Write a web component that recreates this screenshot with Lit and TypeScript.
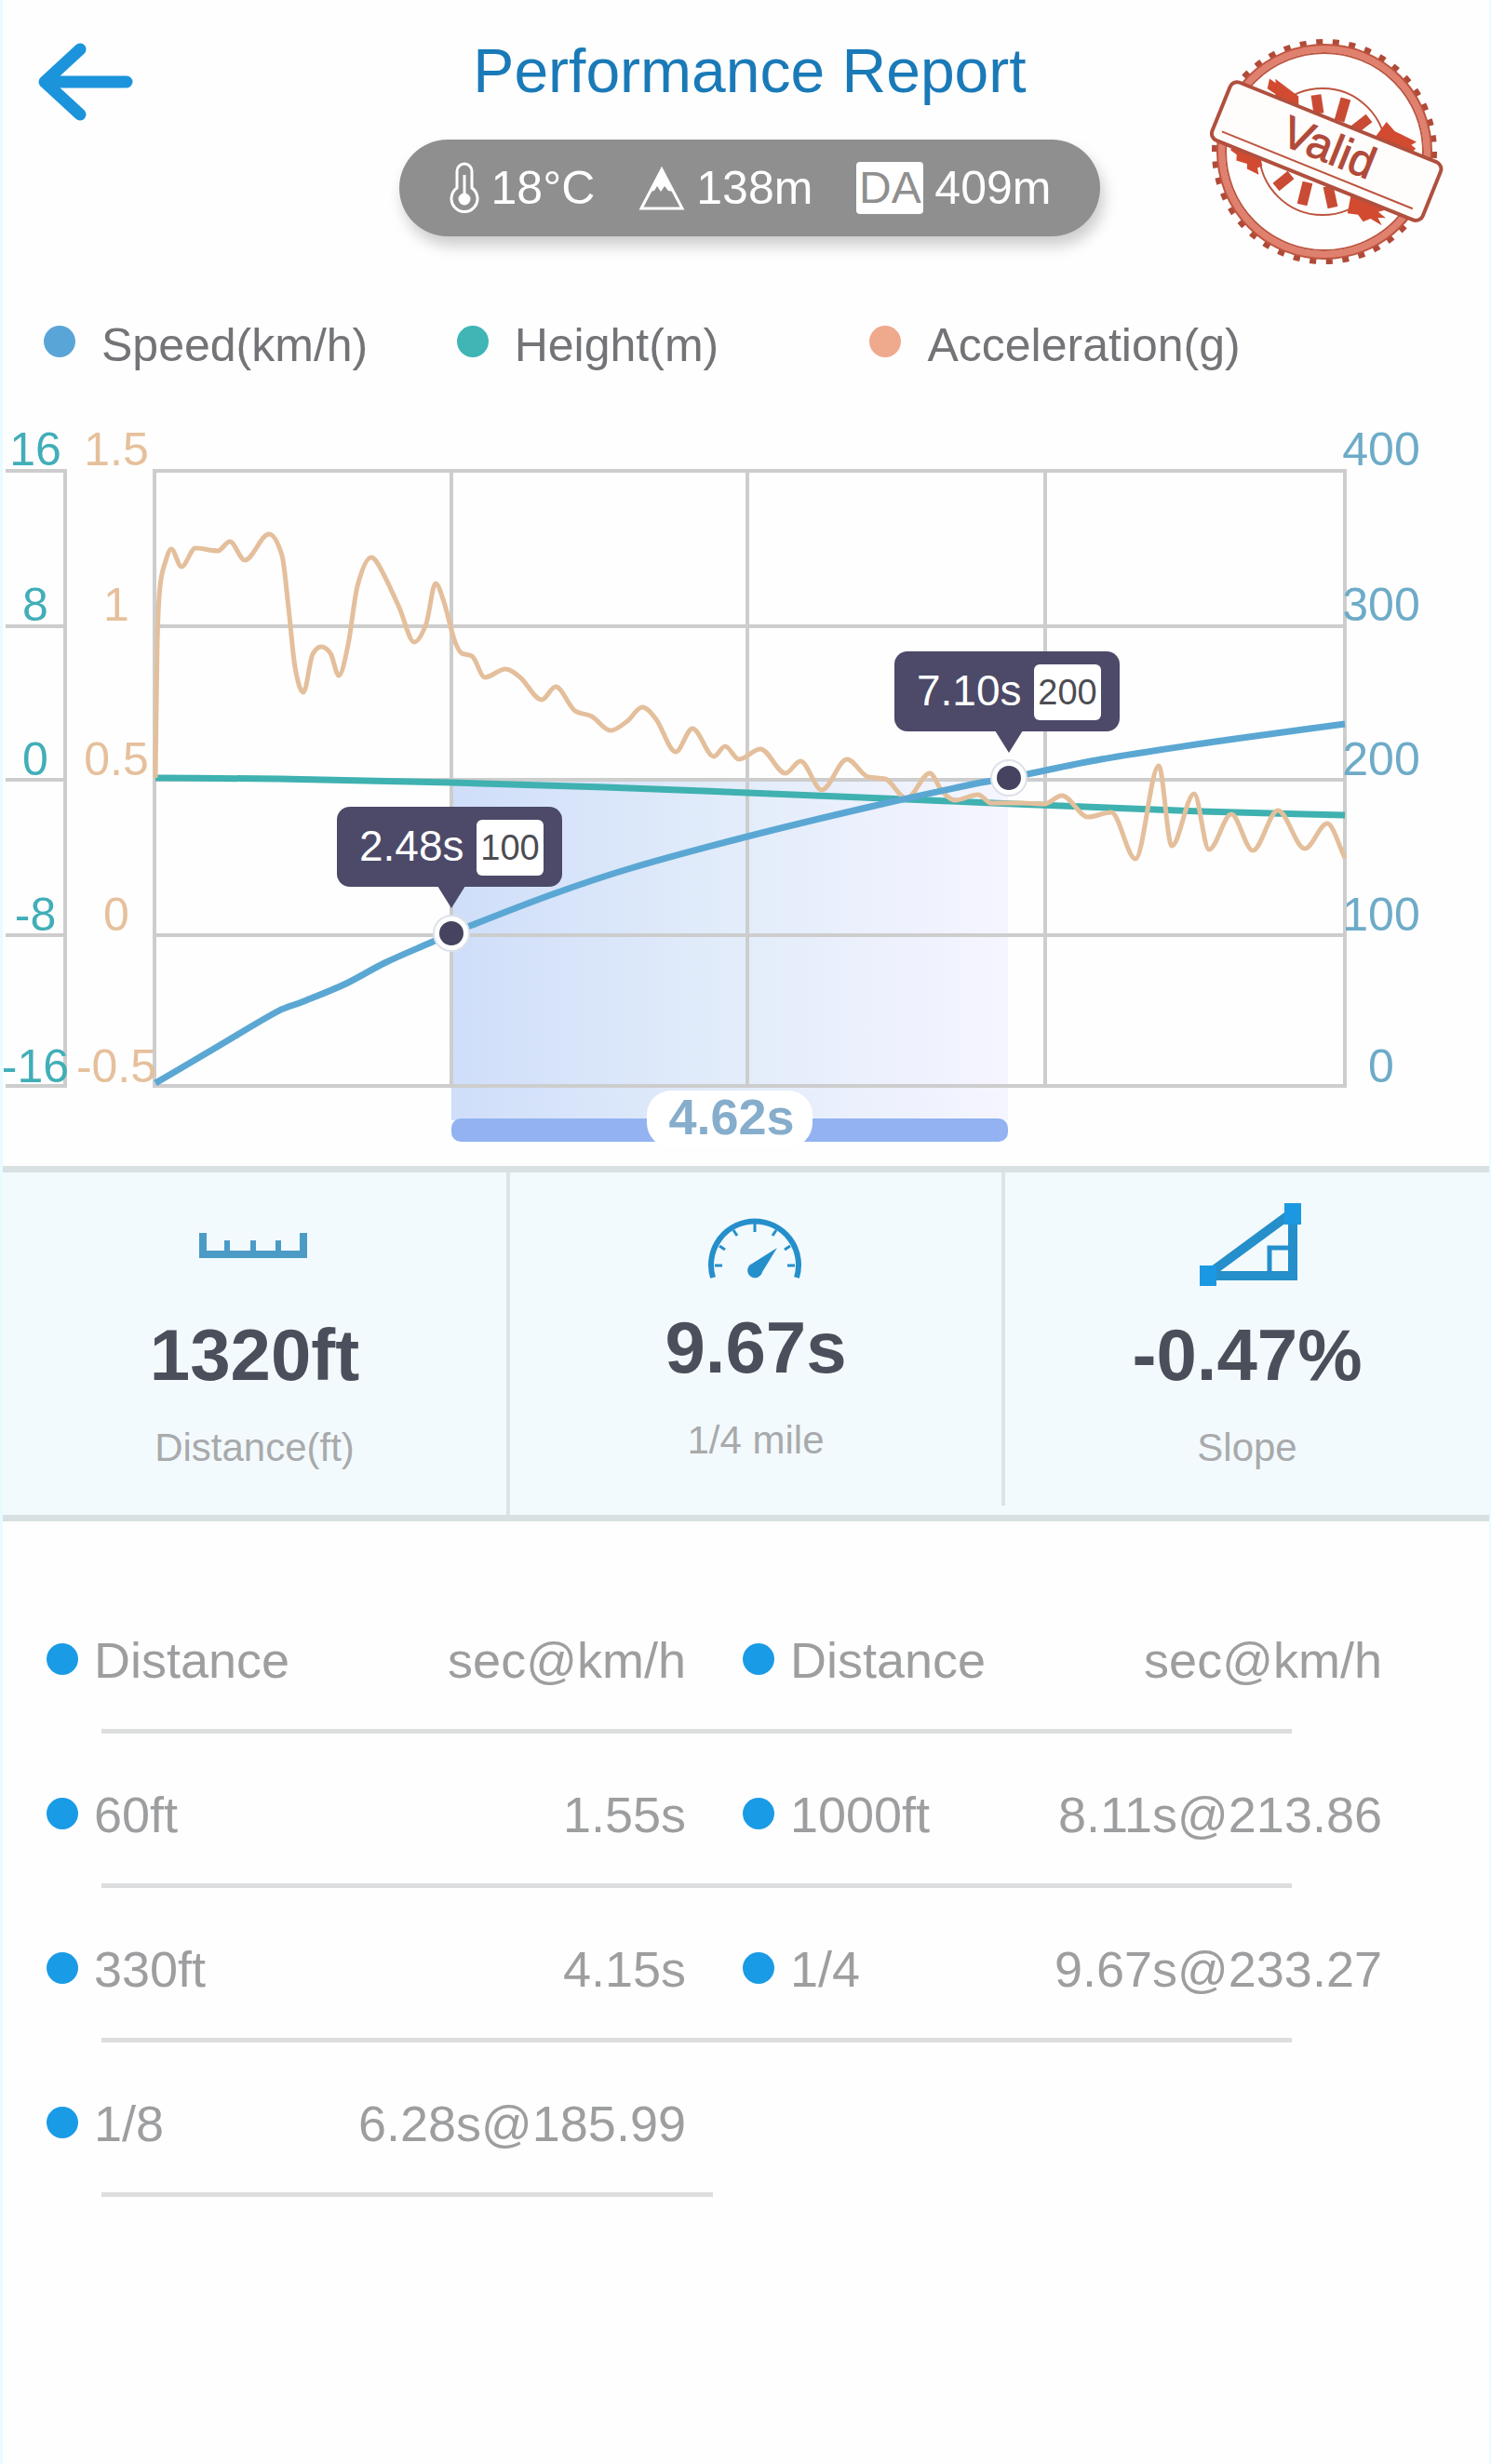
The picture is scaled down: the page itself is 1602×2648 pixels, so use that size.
import { css, html, svg, LitElement } from "lit";
import { customElement, property } from "lit/decorators.js";

type Point = [number, number];

const GRID_X = [166, 485, 803, 1123, 1445];
const GRID_Y = [506, 673, 838, 1005, 1167];
const LABEL_Y = [500, 667, 833, 1000, 1163];

const HEIGHT_LABELS = ['16', '8', '0', '-8', '-16'];
const ACCEL_LABELS = ['1.5', '1', '0.5', '0', '-0.5'];
const SPEED_LABELS = ['400', '300', '200', '100', '0'];

const SPEED: Point[] = [
    [167, 1164], [235, 1124], [300, 1086], [324, 1077], [372, 1057], [413, 1035], [465, 1012],
    [485, 1003], [591, 962], [678, 933], [803, 899], [935, 867], [1049, 842],
    [1084, 836], [1183, 816], [1327, 794], [1445, 778],
];

const HEIGHT: Point[] = [
    [167, 836], [300, 837], [485, 841], [650, 846], [803, 852], [950, 858], [1089, 864],
    [1291, 872], [1445, 876],
];

const ACCEL: Point[] = [
    [167, 836], [169, 690], [172, 630], [178, 603], [184, 590], [195, 609], [210, 589], [234, 592],
    [247, 582], [263, 602], [289, 574], [303, 597], [310, 653], [317, 717], [326, 744],
    [336, 703], [345, 695], [355, 702], [364, 726], [374, 693], [384, 630], [399, 599],
    [410, 613], [429, 653], [445, 690], [458, 670], [468, 627], [477, 647], [488, 687],
    [496, 702], [507, 705], [521, 728], [543, 719], [559, 728], [582, 752], [597, 738],
    [618, 764], [636, 770], [656, 785], [674, 775], [690, 760], [705, 773], [726, 808],
    [744, 783], [767, 813], [779, 802], [794, 816], [817, 805], [844, 831], [860, 818],
    [883, 849], [910, 816], [933, 835], [951, 837], [974, 858], [999, 831], [1012, 850],
    [1026, 860], [1051, 854], [1065, 863], [1097, 863], [1122, 864], [1141, 855], [1169, 878],
    [1194, 873], [1220, 923], [1245, 823], [1259, 909], [1283, 853], [1299, 913], [1323, 875],
    [1346, 914], [1373, 871], [1402, 912], [1426, 885], [1445, 922],
];

// Cubic curve through the points, flat at every local peak and valley
function smoothPath(points: Point[]) {
    const slope = (a: Point, b: Point) => (b[1] - a[1]) / (b[0] - a[0]);
    const tangents = points.map((p, i) => {
        if (i === 0) return slope(p, points[1]);
        if (i === points.length - 1) return slope(points[i - 1], p);
        const before = slope(points[i - 1], p);
        const after = slope(p, points[i + 1]);
        if (before * after <= 0) return 0;
        const limit = 2 * Math.min(Math.abs(before), Math.abs(after));
        const mean = Math.abs(slope(points[i - 1], points[i + 1]));
        return Math.sign(before) * Math.min(limit, mean);
    });
    let d = `M${points[0][0]},${points[0][1]}`;
    for (let i = 1; i < points.length; i++) {
        const [x0, y0] = points[i - 1];
        const [x1, y1] = points[i];
        const h = (x1 - x0) / 3;
        d += `C${x0 + h},${y0 + tangents[i - 1] * h} ${x1 - h},${y1 - tangents[i] * h} ${x1},${y1}`;
    }
    return d;
}

@customElement('run-chart')
export class RunChart extends LitElement {
    static styles = css`
        :host {
            display: block;
        }
        svg {
            display: block;
            width: 100%;
            height: auto;
            font-family: "Liberation Sans", Arial, sans-serif;
        }
        .grid {
            stroke: #cdcdcd;
            stroke-width: 4;
            fill: none;
        }
        .series {
            fill: none;
            stroke-linejoin: round;
        }
        .speed {
            stroke: #5ba7d3;
            stroke-width: 7;
        }
        .height {
            stroke: #3fb1b0;
            stroke-width: 7;
        }
        .accel {
            stroke: #e4bf9c;
            stroke-width: 5;
        }
        .axis {
            font-size: 50px;
            text-anchor: middle;
        }
        .axis-height {
            fill: #41aeb8;
        }
        .axis-accel {
            fill: #e6c09c;
        }
        .axis-speed {
            fill: #6dabc8;
        }
        .bubble {
            fill: #4c4a68;
        }
        .time {
            font-size: 46px;
            fill: #fff;
        }
        .mark {
            font-size: 38px;
            fill: #4c4c52;
            text-anchor: middle;
        }
        .span {
            font-size: 54px;
            font-weight: bold;
            fill: #86adcb;
            text-anchor: middle;
        }
    `;

    private axis(labels: string[], x: number, name: string) {
        return labels.map((label, i) => svg`
            <text class="axis ${name}" x=${x} y=${LABEL_Y[i]}>${label}</text>
        `);
    }

    private callout(x: number, y: number, time: string, mark: string) {
        return svg`
            <g transform="translate(${x} ${y})">
                <circle r="19" fill="#fff" stroke="#dde1e9" stroke-width="2" />
                <circle r="13" fill="#45435f" />
                <rect class="bubble" x="-123" y="-136" width="242" height="86" rx="14" />
                <path class="bubble" d="M-15-51h30L0-27z" />
                <text class="time" x="-99" y="-78">${time}</text>
                <rect x="27" y="-122" width="72" height="60" rx="6" fill="#fff" />
                <text class="mark" x="63" y="-79">${mark}</text>
            </g>
        `;
    }

    render() {
        return html`
            <svg viewBox="3 400 1597 853" role="img" aria-label="Speed, height and acceleration over time">
                <defs>
                    <linearGradient id="shade">
                        <stop offset="0" stop-color="#cfdef9" />
                        <stop offset="0.5" stop-color="#e2ecfa" />
                        <stop offset="1" stop-color="#f5f5ff" />
                    </linearGradient>
                </defs>
                <rect x="485" y="840" width="598" height="364" fill="url(#shade)" />
                <g class="grid">
                    ${GRID_X.map((x) => svg`<path d="M${x} 504V1169" />`)}
                    ${GRID_Y.map((y) => svg`<path d="M166 ${y}H1445" />`)}
                    ${GRID_Y.map((y) => svg`<path d="M6 ${y}H70" />`)}
                    <path d="M70 504V1169" />
                </g>
                ${this.axis(HEIGHT_LABELS, 38, 'axis-height')}
                ${this.axis(ACCEL_LABELS, 125, 'axis-accel')}
                ${this.axis(SPEED_LABELS, 1484, 'axis-speed')}
                <path class="series height" d=${smoothPath(HEIGHT)} />
                <path class="series accel" d=${smoothPath(ACCEL)} />
                <path class="series speed" d=${smoothPath(SPEED)} />
                <rect x="485" y="1202" width="598" height="25" rx="10" fill="#92b2f1" />
                <rect x="695" y="1172" width="178" height="61" rx="26" fill="#fff" />
                <text class="span" x="786" y="1219">4.62s</text>
                ${this.callout(485, 1003, '2.48s', '100')}
                ${this.callout(1084, 836, '7.10s', '200')}
            </svg>
        `;
    }
}

@customElement('valid-stamp')
export class ValidStamp extends LitElement {
    static styles = css`
        :host {
            display: block;
        }
        svg {
            display: block;
            width: 280px;
            height: 270px;
        }
        .line {
            fill: none;
            stroke: #bd5540;
            stroke-width: 2;
        }
        .ring {
            fill: none;
            stroke: #e0806e;
            stroke-width: 8;
        }
        .teeth {
            fill: none;
            stroke: #b04a38;
            stroke-width: 6;
        }
        .solid {
            fill: #d24a30;
        }
        .bars {
            stroke: #c94b34;
            stroke-width: 11;
        }
        .banner {
            fill: #fffdfb;
            stroke: #b0503e;
            stroke-width: 4;
        }
        text {
            font-family: "Liberation Sans", Arial, sans-serif;
            font-size: 48px;
            fill: #b04a3a;
            stroke: #b04a3a;
            stroke-width: 1;
            text-anchor: middle;
        }
    `;

    render() {
        return html`
            <svg viewBox="-133 -133 280 270" role="img" aria-label="Valid">
                <circle class="teeth" r="118" pathLength="420" stroke-dasharray="4 6" />
                <circle class="ring" r="111" />
                <circle class="line" r="115" />
                <circle class="line" r="106" />
                <circle class="line" cx="-2" r="68" stroke-width="4" />
                <path class="bars" d="M-9-61l3 20M23-57l-7 24M48-36l-18 14M-36 25l-16 13M-18 33l-6 24M4 37l5 23" />
                <g transform="translate(2 0) rotate(22)">
                    <path class="solid" d="M-86-50l8 2-2-4 30 8 6 14h-26l-4-7-10-2zM48-54l12 6 26 2-4 5 6 2-4 8H42z" />
                    <path class="solid" d="M-96 34h34l4 6-4 4 4 6-14-1-2-5-12 1-2-6-8-2zM42 33h42l-8 6 10 3-8 3 7 6-14-2-6 6-8-5-11 3z" />
                    <rect class="banner" x="-122" y="-34" width="244" height="67" rx="8" />
                    <path class="line" stroke-width="3" d="M-112 22H109" />
                    <text x="1" y="11">Valid</text>
                </g>
            </svg>
        `;
    }
}

@customElement('stat-cell')
export class StatCell extends LitElement {
    static styles = css`
        :host {
            display: flex;
            flex-direction: column;
            align-items: center;
            justify-content: flex-end;
            text-align: center;
        }
        svg {
            width: 120px;
            height: 90px;
            margin-bottom: 30px;
            fill: none;
            stroke: #258fcb;
        }
        .value {
            font-size: 78px;
            line-height: 88px;
            font-weight: bold;
            color: #4b4f5b;
        }
        .label {
            margin-top: 32px;
            font-size: 42px;
            line-height: 48px;
            color: #a8aaac;
        }
    `;

    @property({ type: String }) icon: 'ruler' | 'gauge' | 'slope' = 'ruler';
    @property({ type: String }) value = '';
    @property({ type: String }) label = '';

    private drawing() {
        switch (this.icon) {
            case 'ruler':
                return svg`
                    <g stroke="#4b9bc7">
                        <path stroke-width="8" d="M4 33v23h108V33" />
                        <path stroke-width="6" d="M30 41v12M58 41v12M85 41v12" />
                    </g>
                `;
            case 'gauge':
                return svg`
                    <path stroke-width="6" d="M14 89A47 47 0 1 1 104 89" />
                    <path stroke-width="3" d="M16 76h8M21 55l6 4M36 38l4 6M59 31v9M82 38l-4 6M97 55l-6 4M102 76h-8" />
                    <path fill="#258fcb" stroke="none" d="M83 57L67 83a8 8 0 1 1-11-9z" />
                `;
            default:
                return svg`
                    <path stroke-width="10" d="M16 79L107 12" />
                    <path stroke-width="10" d="M16 79H109V12" />
                    <path stroke-width="5" d="M84 75V49H105" />
                    <path fill="#1c98e2" stroke="none" d="M9 68h18v22H9zM100 1h18v23h-18z" />
                `;
        }
    }

    render() {
        return html`
            <svg viewBox="0 0 120 90" aria-hidden="true">${this.drawing()}</svg>
            <div class="value">${this.value}</div>
            <div class="label">${this.label}</div>
        `;
    }
}

const SPLITS = [
    ['60ft', '1.55s', '1000ft', '8.11s@213.86'],
    ['330ft', '4.15s', '1/4', '9.67s@233.27'],
    ['1/8', '6.28s@185.99'],
];

@customElement('app-root')
export class AppRoot extends LitElement {
    static styles = css`
        :host {
            display: block;
            box-sizing: border-box;
            min-height: 100vh;
            border-left: 3px solid #e6fcff;
            border-right: 2px solid #e6fcff;
            background: #fefefe;
            font-family: "Liberation Sans", Arial, sans-serif;
        }
        header {
            display: grid;
            grid-template-columns: 1fr auto 1fr;
            padding: 30px 30px 0 38px;
        }
        .back {
            justify-self: start;
            align-self: start;
            margin-top: 16px;
            padding: 0;
            border: none;
            background: none;
            cursor: pointer;
        }
        .back svg {
            display: block;
            width: 102px;
            height: 84px;
            fill: none;
            stroke: #1b94db;
            stroke-width: 13;
            stroke-linecap: round;
            stroke-linejoin: round;
        }
        .heading {
            display: flex;
            flex-direction: column;
            align-items: center;
            gap: 36px;
            padding-top: 8px;
        }
        h1 {
            margin: 0;
            font-size: 66px;
            line-height: 76px;
            font-weight: normal;
            color: #1a7ab8;
        }
        .conditions {
            display: flex;
            align-items: center;
            gap: 47px;
            height: 104px;
            padding: 0 53px;
            border-radius: 52px;
            background: #8f8f8f;
            box-shadow: 4px 10px 16px rgba(0, 0, 0, 0.2);
            color: #fff;
            font-size: 50px;
            line-height: 58px;
        }
        .condition {
            display: flex;
            align-items: center;
            gap: 12px;
        }
        .condition svg {
            fill: none;
            stroke: #fff;
            stroke-width: 3;
        }
        .da {
            width: 72px;
            border-radius: 4px;
            background: #fff;
            color: #8f8f8f;
            font-size: 48px;
            line-height: 56px;
            text-align: center;
        }
        valid-stamp {
            justify-self: end;
        }
        .legend {
            display: grid;
            grid-template-columns: 2fr 2fr 3fr;
            margin: 42px 0 0;
            padding: 0 0 0 44px;
            list-style: none;
            font-size: 50px;
            line-height: 58px;
            color: #737477;
        }
        .legend li {
            display: flex;
            align-items: center;
            gap: 28px;
        }
        .dot {
            flex: none;
            width: 34px;
            height: 34px;
            border-radius: 50%;
            background: #1a9be6;
        }
        .legend .dot {
            margin-bottom: 8px;
        }
        td .dot,
        th .dot {
            margin-bottom: 3px;
        }
        .dot.speed {
            background: #5aa5d8;
        }
        .dot.height {
            background: #3fb5b5;
        }
        .dot.accel {
            background: #efa98d;
        }
        .stats {
            display: grid;
            grid-template-columns: 545fr 532fr 520fr;
            height: 368px;
            border-top: 7px solid #d9e0e2;
            border-bottom: 7px solid #d9e0e2;
            background: #f3fafd;
        }
        stat-cell {
            padding-bottom: 48px;
            border-right: 4px solid #dde4e7;
        }
        stat-cell:nth-child(2) {
            margin-bottom: 10px;
            padding-bottom: 46px;
        }
        stat-cell:last-child {
            border-right: none;
        }
        table {
            display: block;
            padding: 62px 115px 0 47px;
            font-size: 54px;
            line-height: 62px;
            color: #9d9ea0;
        }
        thead,
        tbody {
            display: block;
        }
        tr {
            display: grid;
            grid-template-columns: 4fr 6fr 61px 4fr 6fr;
        }
        tr::after {
            content: "";
            grid-column: 1 / -1;
            height: 5px;
            margin: 0 97px 0 59px;
            background: #dcddde;
        }
        tr.half::after {
            grid-column: 1 / 4;
            margin-right: 32px;
        }
        th,
        td {
            display: flex;
            align-items: center;
            padding: 56px 0 43px;
            font-weight: normal;
            white-space: nowrap;
        }
        th:nth-child(odd),
        td:nth-child(odd) {
            gap: 17px;
        }
        th:nth-child(even),
        td:nth-child(even) {
            justify-content: flex-end;
        }
        th:nth-child(3),
        td:nth-child(3) {
            grid-column: 4;
        }
    `;

    render() {
        return html`
            <header>
                <button class="back" type="button" aria-label="Back">
                    <svg viewBox="0 0 102 84"><path d="M45 7L7 42l38 35M9 42h86" /></svg>
                </button>
                <div class="heading">
                    <h1>Performance Report</h1>
                    <div class="conditions">
                        <div class="condition">
                            <svg width="34" height="56" viewBox="0 0 34 56" aria-hidden="true">
                                <path d="M9 28V10a8 8 0 0 1 16 0v18a14 14 0 1 1-16 0z" />
                                <path d="M17 14v24" />
                                <circle cx="17" cy="40" r="5" fill="#fff" />
                            </svg>
                            <span>18°C</span>
                        </div>
                        <div class="condition">
                            <svg width="50" height="48" viewBox="0 0 50 48" aria-hidden="true">
                                <path d="M25 4L3 46h44z" />
                                <path fill="#fff" stroke="none" d="M25 2L12 28l5-1 3-5 4 6 4-6 4 5 6 1z" />
                            </svg>
                            <span>138m</span>
                        </div>
                        <div class="condition">
                            <span class="da">DA</span>
                            <span>409m</span>
                        </div>
                    </div>
                </div>
                <valid-stamp></valid-stamp>
            </header>

            <ul class="legend">
                <li><span class="dot speed"></span>Speed(km/h)</li>
                <li><span class="dot height"></span>Height(m)</li>
                <li><span class="dot accel"></span>Acceleration(g)</li>
            </ul>

            <run-chart></run-chart>

            <section class="stats">
                <stat-cell icon="ruler" value="1320ft" label="Distance(ft)"></stat-cell>
                <stat-cell icon="gauge" value="9.67s" label="1/4 mile"></stat-cell>
                <stat-cell icon="slope" value="-0.47%" label="Slope"></stat-cell>
            </section>

            <table>
                <thead>
                    <tr>
                        ${['Distance', 'sec@km/h', 'Distance', 'sec@km/h'].map((name, i) => html`
                            <th scope="col">${i % 2 ? '' : html`<span class="dot"></span>`}${name}</th>
                        `)}
                    </tr>
                </thead>
                <tbody>
                    ${SPLITS.map((cells) => html`
                        <tr class=${cells.length < 4 ? 'half' : ''}>
                            ${cells.map((cell, i) => html`
                                <td>${i % 2 ? '' : html`<span class="dot"></span>`}${cell}</td>
                            `)}
                        </tr>
                    `)}
                </tbody>
            </table>
        `;
    }
}

declare global {
    interface HTMLElementTagNameMap {
        'run-chart': RunChart;
        'valid-stamp': ValidStamp;
        'stat-cell': StatCell;
        'app-root': AppRoot;
    }
}
